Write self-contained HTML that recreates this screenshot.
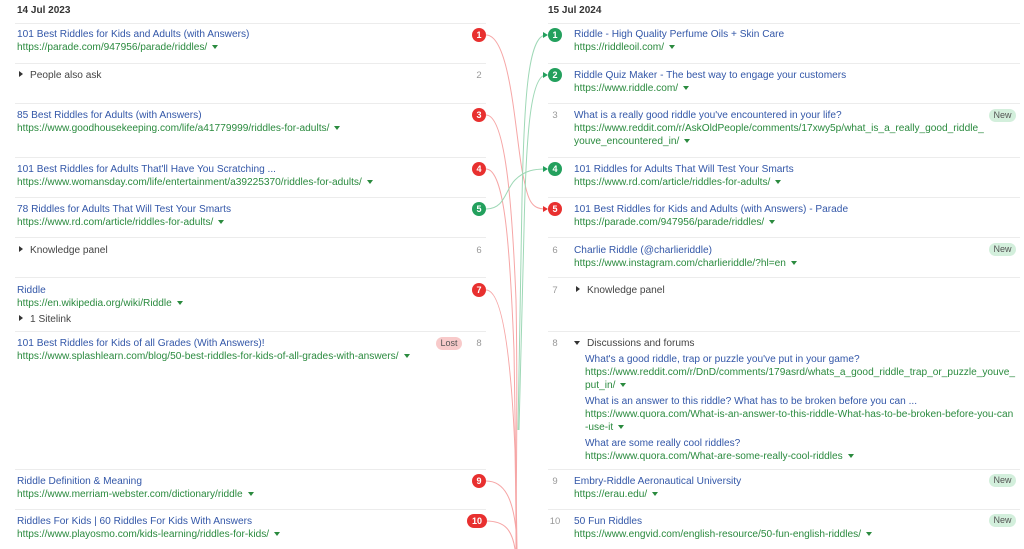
<!DOCTYPE html>
<html><head><meta charset="utf-8">
<style>
*{margin:0;padding:0;box-sizing:border-box}
body{width:1024px;height:549px;overflow:hidden;background:#fff;font-family:"Liberation Sans",Arial,sans-serif;font-size:10.15px;position:relative;color:#333}
.a{position:absolute;white-space:nowrap;line-height:13px}
.t{color:#3357a8}
.u{color:#2a8a3e}
.u::after{content:"";display:inline-block;margin-left:5px;border-left:3px solid transparent;border-right:3px solid transparent;border-top:4px solid #2a8a3e;vertical-align:1px}
.g{color:#444}
.h{font-weight:bold;color:#333;font-size:10px}
.sep{position:absolute;height:1px;background:#ececec}
.b{position:absolute;width:14px;height:14px;border-radius:7px;color:#fff;font-size:9px;font-weight:bold;text-align:center;line-height:14px}
.r{background:#e8302f}.gr{background:#23a05d}
.n{position:absolute;color:#999;font-size:9.5px;line-height:13px;width:14px;text-align:center}
.new{position:absolute;left:989px;width:27px;height:13px;border-radius:7px;background:#d3efdc;color:#555;font-size:9px;text-align:center;line-height:13px}
.lost{position:absolute;left:436px;width:26px;height:13px;border-radius:7px;background:#f8caca;color:#555;font-size:9px;text-align:center;line-height:13px}
.tri::before{content:"";display:inline-block;border-top:3px solid transparent;border-bottom:3px solid transparent;border-left:4px solid #333;margin-right:7px;vertical-align:1px}
.trd::before{content:"";display:inline-block;border-left:3px solid transparent;border-right:3px solid transparent;border-top:4px solid #333;margin-right:7px;vertical-align:1px}
</style></head><body>

<div class="a h" style="left:17px;top:4px">14 Jul 2023</div>
<div class="a h" style="left:548px;top:4px">15 Jul 2024</div>

<div class="sep" style="left:15px;width:471px;top:23px"></div>
<div class="sep" style="left:15px;width:471px;top:63px"></div>
<div class="sep" style="left:15px;width:471px;top:103px"></div>
<div class="sep" style="left:15px;width:471px;top:157px"></div>
<div class="sep" style="left:15px;width:471px;top:197px"></div>
<div class="sep" style="left:15px;width:471px;top:237px"></div>
<div class="sep" style="left:15px;width:471px;top:277px"></div>
<div class="sep" style="left:15px;width:471px;top:331px"></div>
<div class="sep" style="left:15px;width:471px;top:469px"></div>
<div class="sep" style="left:15px;width:471px;top:509px"></div>
<div class="sep" style="left:548px;width:472px;top:23px"></div>
<div class="sep" style="left:548px;width:472px;top:63px"></div>
<div class="sep" style="left:548px;width:472px;top:103px"></div>
<div class="sep" style="left:548px;width:472px;top:157px"></div>
<div class="sep" style="left:548px;width:472px;top:197px"></div>
<div class="sep" style="left:548px;width:472px;top:237px"></div>
<div class="sep" style="left:548px;width:472px;top:277px"></div>
<div class="sep" style="left:548px;width:472px;top:331px"></div>
<div class="sep" style="left:548px;width:472px;top:469px"></div>
<div class="sep" style="left:548px;width:472px;top:509px"></div>

<svg style="position:absolute;left:0;top:0" width="1024" height="549">
<g fill="none" stroke="#f6a6a6" stroke-width="1">
<path d="M486 35 C510 35 515 130 522 170 C528 200 530 209 546 209"/>
<path d="M486 115 C505 115 512 200 516 300 C518 400 516 480 516 549"/>
<path d="M486 169 C505 169 510 250 514 350 C516 450 516 500 517 549"/>
<path d="M486 290 C505 290 512 380 515 450 C516 500 516 520 516 549"/>
<path d="M486 481 C505 481 513 500 516 530 L516 549"/>
<path d="M486 521 C505 521 512 530 515 549"/>
</g>
<g fill="none" stroke="#9ed8b6" stroke-width="1">
<path d="M486 209 C505 209 505 190 515 180 C525 170 535 169 546 169"/>
<path d="M546 35 C528 35 524 100 522 200 C520 300 519 380 518 430"/>
<path d="M546 75 C530 75 526 140 524 230 C522 320 520 380 519 430"/>
</g>
<g fill="#23a05d"><path d="M548 35 l-5 -3 v6z"/><path d="M548 75 l-5 -3 v6z"/><path d="M548 169 l-5 -3 v6z"/></g>
<path d="M548 209 l-5 -3 v6z" fill="#e8302f"/>
</svg>

<div class="a t" style="left:17px;top:28px">101 Best Riddles for Kids and Adults (with Answers)</div>
<div class="a u" style="left:17px;top:41px">https://parade.com/947956/parade/riddles/</div>
<div class="b r" style="left:472px;top:28px">1</div>

<div class="a g tri" style="left:19px;top:69px">People also ask</div>
<div class="n" style="left:472px;top:69px">2</div>

<div class="a t" style="left:17px;top:109px">85 Best Riddles for Adults (with Answers)</div>
<div class="a u" style="left:17px;top:122px">https://www.goodhousekeeping.com/life/a41779999/riddles-for-adults/</div>
<div class="b r" style="left:472px;top:108px">3</div>

<div class="a t" style="left:17px;top:163px">101 Best Riddles for Adults That'll Have You Scratching ...</div>
<div class="a u" style="left:17px;top:176px">https://www.womansday.com/life/entertainment/a39225370/riddles-for-adults/</div>
<div class="b r" style="left:472px;top:162px">4</div>

<div class="a t" style="left:17px;top:203px">78 Riddles for Adults That Will Test Your Smarts</div>
<div class="a u" style="left:17px;top:216px">https://www.rd.com/article/riddles-for-adults/</div>
<div class="b gr" style="left:472px;top:202px">5</div>

<div class="a g tri" style="left:19px;top:244px">Knowledge panel</div>
<div class="n" style="left:472px;top:244px">6</div>

<div class="a t" style="left:17px;top:284px">Riddle</div>
<div class="a u" style="left:17px;top:297px">https://en.wikipedia.org/wiki/Riddle</div>
<div class="a g tri" style="left:19px;top:313px">1 Sitelink</div>
<div class="b r" style="left:472px;top:283px">7</div>

<div class="a t" style="left:17px;top:337px">101 Best Riddles for Kids of all Grades (With Answers)!</div>
<div class="a u" style="left:17px;top:350px">https://www.splashlearn.com/blog/50-best-riddles-for-kids-of-all-grades-with-answers/</div>
<div class="lost" style="top:337px">Lost</div>
<div class="n" style="left:472px;top:337px">8</div>

<div class="a t" style="left:17px;top:475px">Riddle Definition &amp; Meaning</div>
<div class="a u" style="left:17px;top:488px">https://www.merriam-webster.com/dictionary/riddle</div>
<div class="b r" style="left:472px;top:474px">9</div>

<div class="a t" style="left:17px;top:515px">Riddles For Kids | 60 Riddles For Kids With Answers</div>
<div class="a u" style="left:17px;top:528px">https://www.playosmo.com/kids-learning/riddles-for-kids/</div>
<div class="b r" style="left:467px;top:514px;width:20px">10</div>

<div class="b gr" style="left:548px;top:28px">1</div>
<div class="a t" style="left:574px;top:28px">Riddle - High Quality Perfume Oils + Skin Care</div>
<div class="a u" style="left:574px;top:41px">https://riddleoil.com/</div>

<div class="b gr" style="left:548px;top:68px">2</div>
<div class="a t" style="left:574px;top:69px">Riddle Quiz Maker - The best way to engage your customers</div>
<div class="a u" style="left:574px;top:82px">https://www.riddle.com/</div>

<div class="n" style="left:548px;top:109px">3</div>
<div class="a t" style="left:574px;top:109px">What is a really good riddle you've encountered in your life?</div>
<div class="a u" style="left:574px;top:122px">https://www.reddit.com/r/AskOldPeople/comments/17xwy5p/what_is_a_really_good_riddle_<br>youve_encountered_in/</div>
<div class="new" style="top:109px">New</div>

<div class="b gr" style="left:548px;top:162px">4</div>
<div class="a t" style="left:574px;top:163px">101 Riddles for Adults That Will Test Your Smarts</div>
<div class="a u" style="left:574px;top:176px">https://www.rd.com/article/riddles-for-adults/</div>

<div class="b r" style="left:548px;top:202px">5</div>
<div class="a t" style="left:574px;top:203px">101 Best Riddles for Kids and Adults (with Answers) - Parade</div>
<div class="a u" style="left:574px;top:216px">https://parade.com/947956/parade/riddles/</div>

<div class="n" style="left:548px;top:244px">6</div>
<div class="a t" style="left:574px;top:244px">Charlie Riddle (@charlieriddle)</div>
<div class="a u" style="left:574px;top:257px">https://www.instagram.com/charlieriddle/?hl=en</div>
<div class="new" style="top:243px">New</div>

<div class="n" style="left:548px;top:284px">7</div>
<div class="a g tri" style="left:576px;top:284px">Knowledge panel</div>

<div class="n" style="left:548px;top:337px">8</div>
<div class="a g trd" style="left:574px;top:337px">Discussions and forums</div>
<div class="a t" style="left:585px;top:353px">What's a good riddle, trap or puzzle you've put in your game?</div>
<div class="a u" style="left:585px;top:366px">https://www.reddit.com/r/DnD/comments/179asrd/whats_a_good_riddle_trap_or_puzzle_youve_<br>put_in/</div>
<div class="a t" style="left:585px;top:395px">What is an answer to this riddle? What has to be broken before you can ...</div>
<div class="a u" style="left:585px;top:408px">https://www.quora.com/What-is-an-answer-to-this-riddle-What-has-to-be-broken-before-you-can<br>-use-it</div>
<div class="a t" style="left:585px;top:437px">What are some really cool riddles?</div>
<div class="a u" style="left:585px;top:450px">https://www.quora.com/What-are-some-really-cool-riddles</div>

<div class="n" style="left:548px;top:475px">9</div>
<div class="a t" style="left:574px;top:475px">Embry-Riddle Aeronautical University</div>
<div class="a u" style="left:574px;top:488px">https://erau.edu/</div>
<div class="new" style="top:474px">New</div>

<div class="n" style="left:548px;top:515px">10</div>
<div class="a t" style="left:574px;top:515px">50 Fun Riddles</div>
<div class="a u" style="left:574px;top:528px">https://www.engvid.com/english-resource/50-fun-english-riddles/</div>
<div class="new" style="top:514px">New</div>

</body></html>
